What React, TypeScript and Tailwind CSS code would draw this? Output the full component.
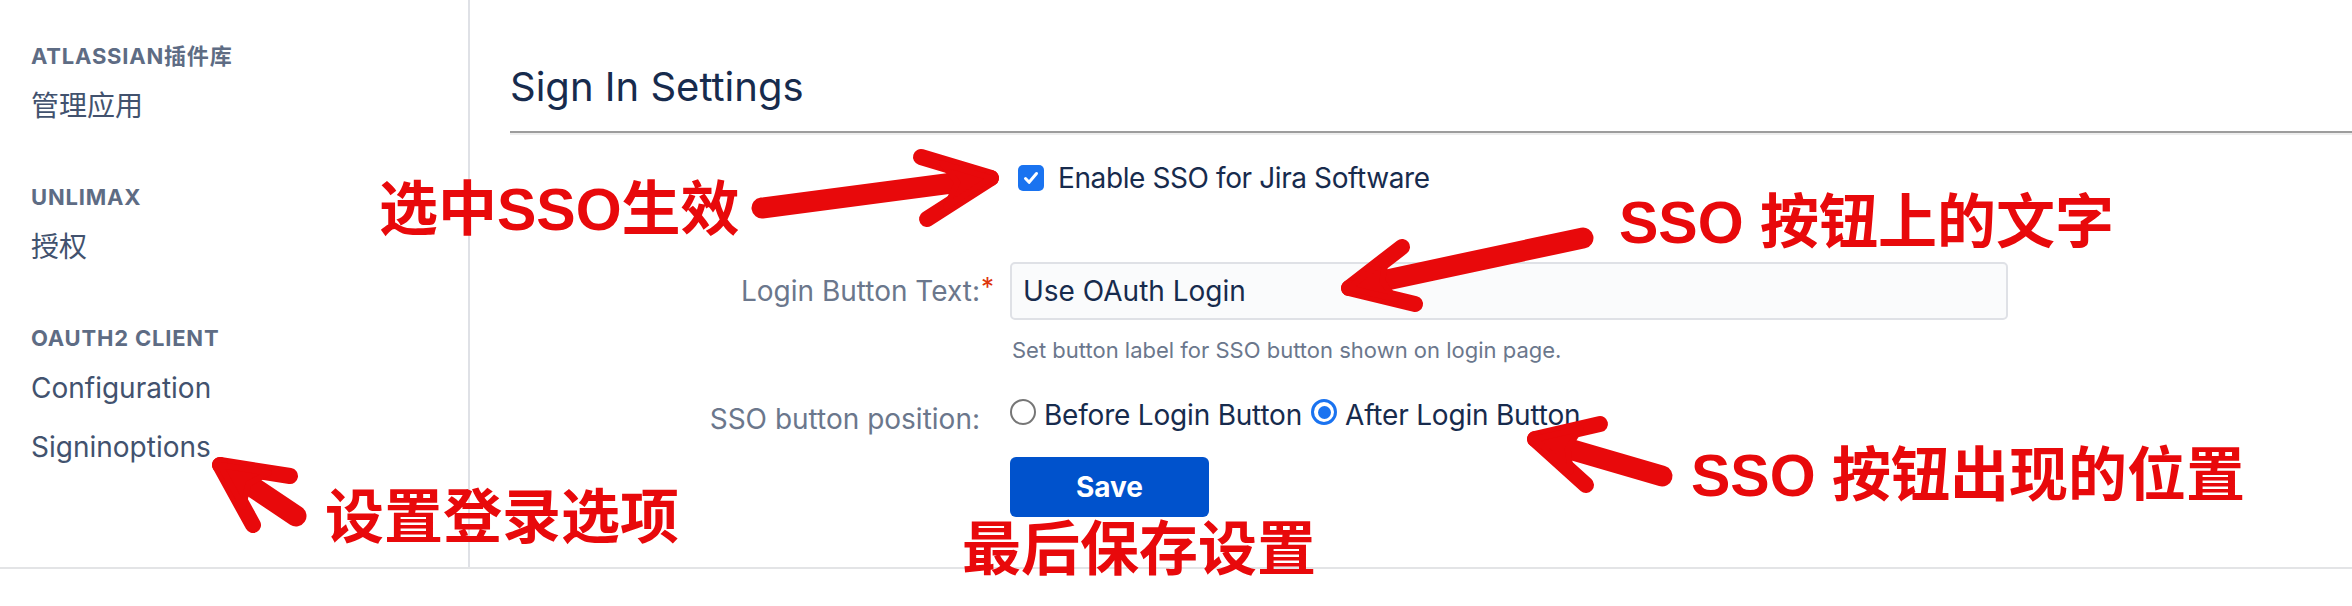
import React from 'react';

type P = [number, number];

const RED = '#e8090b';

// red annotation arrow: thick shaft with rounded tail and a solid head
function Arrow({ tail, tip, b1, b2 }: { tail: P; tip: P; b1: P; b2: P }) {
    const ax = tail[0] - tip[0];
    const ay = tail[1] - tip[1];
    const len = Math.hypot(ax, ay);
    const notch: P = [tip[0] + (ax / len) * 34, tip[1] + (ay / len) * 34];
    const along = (b: P, t: number): P => [tip[0] + (b[0] - tip[0]) * t, tip[1] + (b[1] - tip[1]) * t];
    const p1 = along(b1, 0.7);
    const p2 = along(b2, 0.7);
    return (
        <g fill={RED} stroke={RED} strokeLinecap="round" strokeLinejoin="round">
            <line x1={tail[0]} y1={tail[1]} x2={notch[0]} y2={notch[1]} strokeWidth={21} />
            <line x1={tip[0]} y1={tip[1]} x2={b1[0]} y2={b1[1]} strokeWidth={16} />
            <line x1={tip[0]} y1={tip[1]} x2={b2[0]} y2={b2[1]} strokeWidth={16} />
            <polygon points={`${tip[0]},${tip[1]} ${p1[0]},${p1[1]} ${notch[0]},${notch[1]} ${p2[0]},${p2[1]}`} strokeWidth={6} />
        </g>
    );
}

function Note({ children, className }: { children: React.ReactNode; className: string }) {
    return (
        <div
            className={`absolute whitespace-nowrap font-['Liberation_Sans','Noto_Sans_CJK_SC',sans-serif] text-[59px] leading-[59px] font-bold text-[#e8090b] ${className}`}
        >
            {children}
        </div>
    );
}

function NavGroup({ title, items }: { title: string; items: string[] }) {
    return (
        <div className="pb-[36px]">
            <div className="text-[22px] leading-[32px] font-bold tracking-[0.8px] text-[#5e6c84] uppercase">{title}</div>
            <ul className="pt-[14px]">
                {items.map((item) => (
                    <li key={item} className="pb-[19px] text-[28px] leading-[40px] text-[#42526e]">
                        {item}
                    </li>
                ))}
            </ul>
        </div>
    );
}

function Radio({ checked }: { checked?: boolean }) {
    return checked ? (
        <span className="mt-[4px] flex h-[26px] w-[26px] shrink-0 items-center justify-center rounded-full border-[3px] border-[#1a73f0] bg-white">
            <span className="h-[13px] w-[13px] rounded-full bg-[#1a73f0]" />
        </span>
    ) : (
        <span className="mt-[4px] h-[26px] w-[26px] shrink-0 rounded-full border-2 border-[#767676] bg-white" />
    );
}

export default function App() {
    return (
        <div className="relative h-[606px] w-[2352px] overflow-hidden bg-white font-['Inter','Noto_Sans_CJK_SC',sans-serif]">
            <div className="flex h-[569px] border-b-2 border-[#e3e4e6]">
                <aside className="w-[470px] shrink-0 border-r-2 border-[#dfe1e6] pl-[31px] pt-[40px]">
                    <NavGroup title="Atlassian插件库" items={['管理应用']} />
                    <NavGroup title="Unlimax" items={['授权']} />
                    <NavGroup title="OAuth2 Client" items={['Configuration', 'Signinoptions']} />
                </aside>

                <main className="flex-1 pl-[40px] pt-[63px]">
                    <h1 className="text-[40px] leading-[48px] text-[#172b4d]">Sign In Settings</h1>
                    <div className="mt-[20px] border-t-2 border-b-2 border-t-[#9d9d9d] border-b-[#eeeeee]" />

                    <div className="mt-[23px] flex h-[40px] items-center">
                        <div className="w-[470px] shrink-0" />
                        <div className="ml-[38px] flex items-center gap-[14px]">
                            <span className="flex h-[26px] w-[26px] items-center justify-center rounded-[5px] bg-[#1a73f0]">
                                <svg width="18" height="18" viewBox="0 0 18 18" fill="none">
                                    <path d="M3.5 9.5l3.6 3.8L14.5 4.5" stroke="white" strokeWidth="3" strokeLinecap="round" strokeLinejoin="round" />
                                </svg>
                            </span>
                            <span className="text-[28px] leading-[40px] tracking-[-0.4px] text-[#172b4d]">Enable SSO for Jira Software</span>
                        </div>
                    </div>

                    <div className="mt-[64px] flex items-center">
                        <label className="relative w-[470px] shrink-0 text-right text-[28px] leading-[40px] text-[#6b778c]">
                            Login Button Text:
                            <span className="absolute left-full top-[-4px] pl-[1px] text-[26px] text-[#de350b]">*</span>
                        </label>
                        <div className="ml-[30px] flex h-[58px] w-[998px] items-center rounded-[5px] border-2 border-[#dfe1e6] bg-[#fafbfc] pl-[11px] text-[28px] leading-[40px] text-[#172b4d]">
                            Use OAuth Login
                        </div>
                    </div>

                    <div className="mt-[15px] flex">
                        <div className="w-[470px] shrink-0" />
                        <p className="ml-[32px] text-[22px] leading-[30px] text-[#6b778c]">
                            Set button label for SSO button shown on login page.
                        </p>
                    </div>

                    <div className="mt-[30px] flex items-start">
                        <label className="w-[470px] shrink-0 pt-[4px] text-right text-[28px] leading-[40px] text-[#6b778c]">
                            SSO button position:
                        </label>
                        <div className="ml-[30px] flex items-start text-[28px] leading-[40px] tracking-[-0.2px] text-[#172b4d]">
                            <Radio />
                            <span className="ml-[8px]">Before Login Button</span>
                            <span className="ml-[9px]">
                                <Radio checked />
                            </span>
                            <span className="ml-[8px]">After Login Button</span>
                        </div>
                    </div>

                    <div className="mt-[18px] flex">
                        <div className="w-[470px] shrink-0" />
                        <button className="ml-[30px] h-[60px] w-[199px] rounded-[6px] bg-[#0052cc] text-[28px] font-bold text-white">
                            Save
                        </button>
                    </div>
                </main>
            </div>

            <svg className="pointer-events-none absolute left-0 top-0" width="2352" height="606">
                <Arrow tail={[762, 208]} tip={[991, 178]} b1={[921, 157]} b2={[927, 219]} />
                <Arrow tail={[1583, 238]} tip={[1349, 288]} b1={[1402, 247]} b2={[1415, 304]} />
                <Arrow tail={[1662, 476]} tip={[1535, 439]} b1={[1600, 424]} b2={[1586, 485]} />
                <Arrow tail={[296, 516]} tip={[220, 465]} b1={[290, 476]} b2={[253, 525]} />
            </svg>

            <Note className="left-[379px] top-[181px]">选中SSO生效</Note>
            <Note className="left-[1619px] top-[194px]">SSO 按钮上的文字</Note>
            <Note className="left-[1691px] top-[447px]">SSO 按钮出现的位置</Note>
            <Note className="left-[325px] top-[489px]">设置登录选项</Note>
            <Note className="left-[962px] top-[521px]">最后保存设置</Note>
        </div>
    );
}
